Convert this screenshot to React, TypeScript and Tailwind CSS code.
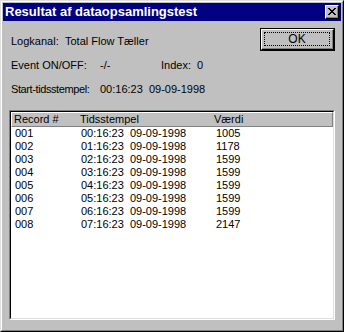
import React from "react";

const rows = [
  ["001", "00:16:23  09-09-1998", "1005"],
  ["002", "01:16:23  09-09-1998", "1178"],
  ["003", "02:16:23  09-09-1998", "1599"],
  ["004", "03:16:23  09-09-1998", "1599"],
  ["005", "04:16:23  09-09-1998", "1599"],
  ["006", "05:16:23  09-09-1998", "1599"],
  ["007", "06:16:23  09-09-1998", "1599"],
  ["008", "07:16:23  09-09-1998", "2147"],
];

function CloseGlyph() {
  return (
    <svg width="8" height="7" viewBox="0 0 8 7" shapeRendering="crispEdges">
      <path
        d="M0 0h2v1H0zM6 0h2v1H6zM1 1h2v1H1zM5 1h2v1H5zM2 2h4v1H2zM3 3h2v1H3zM2 4h4v1H2zM1 5h2v1H1zM5 5h2v1H5zM0 6h2v1H0zM6 6h2v1H6z"
        fill="#000"
      />
    </svg>
  );
}

export default function App() {
  return (
    <div className="w-[344px] h-[332px] bg-[#c0c0c0] text-[11px] leading-[13px] text-black font-['Liberation_Sans',Arial,sans-serif]">
      {/* window frame */}
      <div className="w-full h-full border border-t-[#dfdfdf] border-l-[#dfdfdf] border-r-black border-b-black">
        <div className="w-full h-full flex flex-col border border-t-white border-l-white border-r-[#808080] border-b-[#808080] p-[1px]">
          {/* TITLE BAR */}
          <div className="h-[18px] bg-[#000080] flex items-center justify-between pl-[2px] pr-[2px]">
            <span className="text-white font-bold text-[13px] leading-[14px] whitespace-nowrap">
              Resultat af dataopsamlingstest
            </span>
            <div className="w-[14px] h-[14px] bg-[#c0c0c0] border border-t-white border-l-white border-r-black border-b-black">
              <div className="w-full h-full flex items-center justify-center border-r border-b border-[#808080]">
                <CloseGlyph />
              </div>
            </div>
          </div>

          {/* INFO + OK */}
          <div className="flex justify-between">
            <div className="pl-[8px] pt-[14px] flex flex-col gap-[11px] whitespace-pre">
              <div className="flex">
                <span className="w-[54px]">Logkanal:</span>
                <span>Total Flow Tæller</span>
              </div>
              <div className="flex">
                <span className="w-[89px]">Event ON/OFF:</span>
                <span className="w-[61px]">-/-</span>
                <span className="w-[36px]">Index:</span>
                <span>0</span>
              </div>
              <div className="flex">
                <span className="w-[89px] shrink-0 tracking-[-0.4px]">Start-tidsstempel:</span>
                <span>00:16:23  09-09-1998</span>
              </div>
            </div>
            <div className="mt-[7px] mr-[6px] w-[75px] h-[23px] border border-black">
              <div className="w-full h-full border border-t-white border-l-white border-r-black border-b-black">
                <div className="w-full h-full border-r border-b border-[#808080] p-[2px]">
                  <div className="w-full h-full border border-dotted border-black flex items-center justify-center text-[12px]">
                    OK
                  </div>
                </div>
              </div>
            </div>
          </div>

          {/* LIST */}
          <div className="flex-1 mt-[14px] mx-[6px] mb-[9px] border border-t-[#808080] border-l-[#808080] border-r-white border-b-white">
            <div className="w-full h-full bg-white border border-t-black border-l-black border-r-[#dfdfdf] border-b-[#dfdfdf]">
              <div className="h-[15px] bg-[#c0c0c0] border border-t-white border-l-white border-r-[#808080] border-b-[#808080] grid grid-cols-[66px_134px_1fr] items-center">
                <span className="pl-[2px]">Record #</span>
                <span className="pl-[2px]">Tidsstempel</span>
                <span className="pl-[2px]">Værdi</span>
              </div>
              <div className="flex flex-col">
                {rows.map((r) => (
                  <div key={r[0]} className="grid grid-cols-[67px_134px_1fr] whitespace-pre">
                    <span className="pl-[4px]">{r[0]}</span>
                    <span className="pl-[3px]">{r[1]}</span>
                    <span className="pl-[4px]">{r[2]}</span>
                  </div>
                ))}
              </div>
            </div>
          </div>
        </div>
      </div>
    </div>
  );
}
